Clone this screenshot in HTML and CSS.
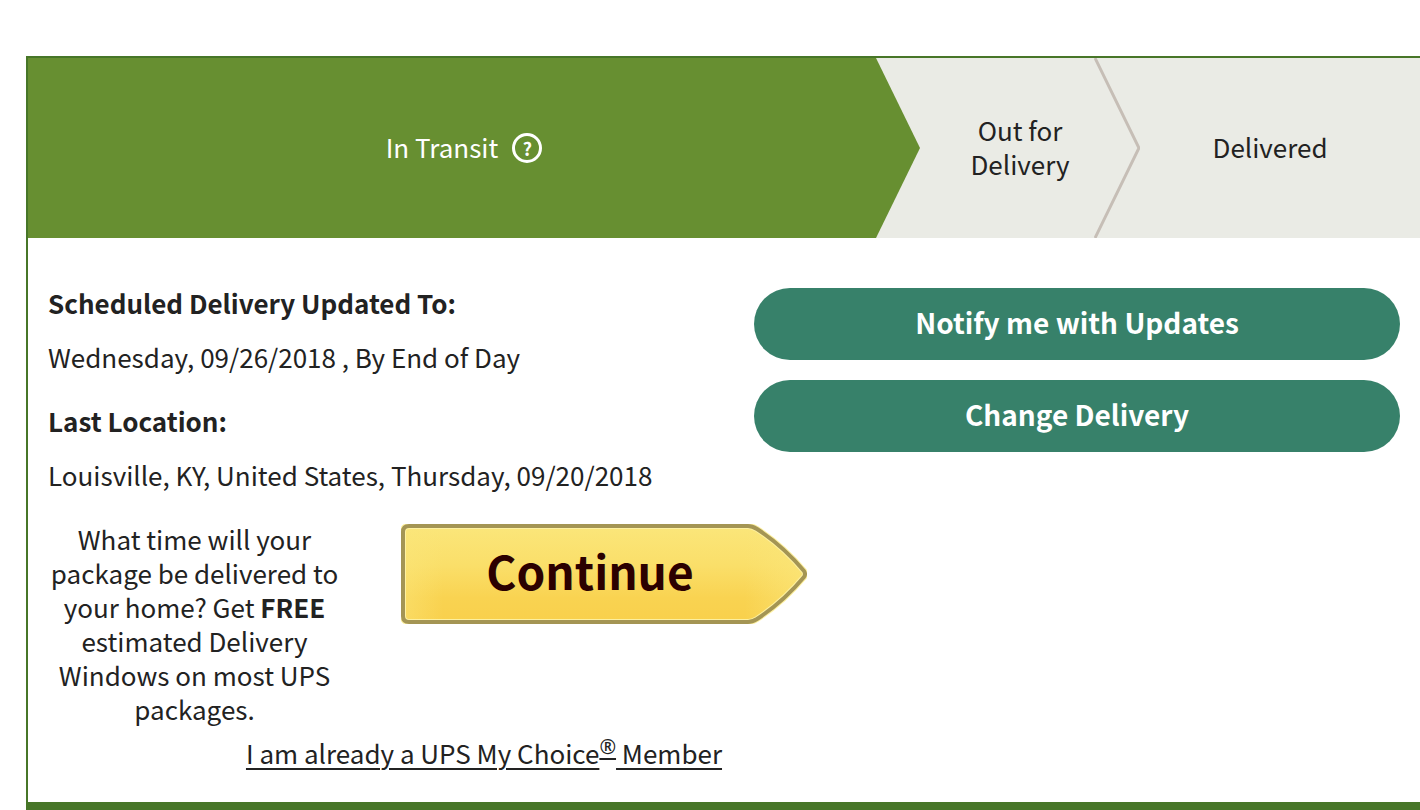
FILE: index.html
```
<!DOCTYPE html>
<html lang="en">
<head>
    <meta charset="UTF-8">
    <meta name="viewport" content="width=device-width, initial-scale=1.0">
    <title>Tracking Detail</title>
    <link rel="stylesheet" href="styles.css">
</head>
<body>
    <div class="tracking">
        <ol class="progress">
            <li class="step current">
                <span>In Transit</span>
                <button type="button" class="help">?</button>
                <svg class="arrow" viewBox="0 0 46 180" preserveAspectRatio="none">
                    <rect width="46" height="180" fill="#eaebe5"/>
                    <path d="M0 0H2L46 90L2 180H0Z" fill="#678f31"/>
                </svg>
            </li>
            <li class="step">
                <span>Out for Delivery</span>
                <svg class="arrow" viewBox="0 0 46 180" preserveAspectRatio="none">
                    <path d="M1 0L45 90L1 180" fill="none" stroke="#c6beb6" stroke-width="3"/>
                </svg>
            </li>
            <li class="step">
                <span>Delivered</span>
            </li>
        </ol>
        <div class="detail">
            <div class="columns">
                <dl class="info">
                    <dt>Scheduled Delivery Updated To:</dt>
                    <dd>Wednesday, 09/26/2018 , By End of Day</dd>
                    <dt>Last Location:</dt>
                    <dd>Louisville, KY, United States, Thursday, 09/20/2018</dd>
                </dl>
                <div class="actions">
                    <button type="button" class="btn">Notify me with Updates</button>
                    <button type="button" class="btn">Change Delivery</button>
                </div>
            </div>
            <div class="promo">
                <div class="offer">
                    <p class="question">What time will your package be delivered to your home? Get <b>FREE</b> estimated Delivery Windows on most UPS packages.</p>
                    <button type="button" class="continue">
                        <svg viewBox="0 0 406 100">
                            <defs>
                                <linearGradient id="gold" x1="0" y1="0" x2="0" y2="1">
                                    <stop offset="0" stop-color="#fbe67a"/>
                                    <stop offset="0.4" stop-color="#fadf6a"/>
                                    <stop offset="0.75" stop-color="#f9d351"/>
                                    <stop offset="1" stop-color="#f9d04c"/>
                                </linearGradient>
                                <linearGradient id="edge" x1="0" y1="0" x2="1" y2="0">
                                    <stop offset="0" stop-color="#fbe67a" stop-opacity="0.5"/>
                                    <stop offset="0.1" stop-color="#fbe67a" stop-opacity="0"/>
                                    <stop offset="0.85" stop-color="#fbe67a" stop-opacity="0"/>
                                    <stop offset="1" stop-color="#fbe67a" stop-opacity="0.7"/>
                                </linearGradient>
                            </defs>
                            <path d="M8 2H347Q351 2 356 5Q382 22 403 47Q405 50 403 53Q382 78 356 95Q351 98 347 98H8Q2 98 2 92V8Q2 2 8 2Z" fill="url(#gold)"/>
                            <path d="M8 2H347Q351 2 356 5Q382 22 403 47Q405 50 403 53Q382 78 356 95Q351 98 347 98H8Q2 98 2 92V8Q2 2 8 2Z" fill="url(#edge)" stroke="#fdf0a0" stroke-width="6"/>
                            <path d="M8 2H347Q351 2 356 5Q382 22 403 47Q405 50 403 53Q382 78 356 95Q351 98 347 98H8Q2 98 2 92V8Q2 2 8 2Z" fill="none" stroke="#a49554" stroke-width="4"/>
                        </svg>
                        <span>Continue</span>
                    </button>
                </div>
                <a class="member" href="#">I am already a UPS My Choice<sup>®</sup> Member</a>
            </div>
        </div>
    </div>
</body>
</html>
```

FILE: styles.css
```
*{
    margin: 0;
    padding: 0;
    box-sizing: border-box;
}
body{
    background: #fff;
    color: #222;
    font-family: "Noto Sans CJK SC", "Noto Sans", sans-serif;
    font-size: 26px;
    line-height: 34px;
}
button{
    border: none;
    background: none;
    font-family: inherit;
    cursor: pointer;
}
.tracking{
    margin: 56px 0 0 26px;
    border: 2px solid #477628;
    border-right: none;
    border-bottom-width: 8px;
}
/* progress bar */
.progress{
    display: grid;
    grid-template-columns: 1fr 220px 280px;
    min-height: 180px;
    list-style: none;
    background: #eaebe5;
}
.step{
    position: relative;
    display: flex;
    align-items: center;
    justify-content: center;
    gap: 14px;
    padding-right: 20px;
    text-align: center;
}
.step span{
    max-width: 140px;
    padding-bottom: 2px;
}
.current{
    background: #678f31;
    color: #fff;
}
.arrow{
    position: absolute;
    top: 0;
    right: 0;
    width: 46px;
    height: 100%;
}
.help{
    width: 30px;
    height: 30px;
    border: 3px solid #fff;
    border-radius: 50%;
    color: #fff;
    font-size: 18px;
    font-weight: bold;
    line-height: 22px;
}
/* detail */
.detail{
    padding: 48px 20px 32px;
}
.columns{
    display: grid;
    grid-template-columns: 1fr 1fr;
    gap: 60px;
}
.info dt{
    margin-bottom: 20px;
    font-weight: bold;
}
.info dd{
    margin-bottom: 30px;
}
.actions{
    display: flex;
    flex-direction: column;
    gap: 20px;
    padding-top: 2px;
}
.btn{
    height: 72px;
    padding-bottom: 4px;
    border-radius: 36px;
    background: #37816a;
    color: #fff;
    font-size: 28px;
    font-weight: bold;
}
.promo{
    max-width: 872px;
    text-align: center;
}
.offer{
    display: flex;
    align-items: flex-start;
    gap: 60px;
    margin-bottom: 10px;
}
.question{
    width: 293px;
}
.continue{
    position: relative;
    width: 406px;
    height: 100px;
    margin-top: 2px;
    padding: 0 28px 8px 0;
    color: #2b0000;
    font-size: 46px;
    font-weight: bold;
}
.continue svg{
    position: absolute;
    top: 0;
    left: 0;
    width: 100%;
    height: 100%;
}
.continue span{
    position: relative;
}
.member{
    color: #222;
    text-decoration-thickness: 2px;
    text-underline-offset: 4px;
}
/* the mark carries its own underline, higher than the text's */
.member sup{
    display: inline-block;
    font-family: "Noto Sans", sans-serif;
    font-size: 20px;
    line-height: 20px;
    text-decoration: underline 2px;
}
```
